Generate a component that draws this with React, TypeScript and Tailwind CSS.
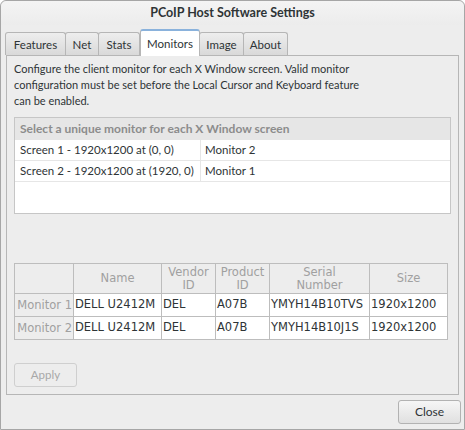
import React from 'react';

const ui = { fontFamily: 'Lato, "Noto Sans", sans-serif' };
const cell = { fontFamily: '"DejaVu Sans", sans-serif' };

const tabs = [
  { label: 'Features', w: 'w-[61px]' },
  { label: 'Net', w: 'w-[34px]' },
  { label: 'Stats', w: 'w-[42px]' },
  { label: 'Monitors', w: 'w-[60px]', active: true },
  { label: 'Image', w: 'w-[45px]' },
  { label: 'About', w: 'w-[45px]' },
];

const screens = [
  ['Screen 1 - 1920x1200 at (0, 0)', 'Monitor 2'],
  ['Screen 2 - 1920x1200 at (1920, 0)', 'Monitor 1'],
];

const monitors = [
  ['Monitor 1', 'DELL U2412M', 'DEL', 'A07B', 'YMYH14B10TVS', '1920x1200'],
  ['Monitor 2', 'DELL U2412M', 'DEL', 'A07B', 'YMYH14B10J1S', '1920x1200'],
];

export default function App() {
  return (
    <div className="w-[465px] h-[430px] bg-[#ededed] border border-[#a6a6a6] rounded-t-[6px] flex flex-col text-[#2e3436]" style={ui}>
      {/* Title bar */}
      <div className="h-[24px] flex items-center justify-center text-[12.5px] font-bold text-[#2e3436] bg-gradient-to-b from-[#f4f4f4] to-[#ececec] rounded-t-[6px]">
        PCoIP Host Software Settings
      </div>

      {/* Tabs */}
      <div className="flex items-end pl-[4px] h-[30px] relative z-10">
        {tabs.map((t) =>
          t.active ? (
            <div
              key={t.label}
              className={`${t.w} h-[27px] bg-white border border-[#b6b6b6] border-b-0 border-t-2 border-t-[#8ab2dc] rounded-t-[3px] flex items-center justify-center text-[11.5px] -mb-px`}
            >
              {t.label}
            </div>
          ) : (
            <div
              key={t.label}
              className={`${t.w} h-[23px] bg-gradient-to-b from-[#eeeeee] to-[#d9d9d9] border border-[#b6b6b6] border-b-0 rounded-t-[3px] -ml-px first:ml-0 flex items-center justify-center text-[11.5px] pt-px`}
            >
              {t.label}
            </div>
          )
        )}
      </div>

      {/* Notebook page */}
      <div className="mx-[5px] h-[340px] border border-[#b6b6b6] bg-[#ededed] px-[7px] pt-[5px] flex flex-col">
        <p className="text-[11px] leading-[16px]">
          Configure the client monitor for each X Window screen. Valid monitor
          <br />
          configuration must be set before the Local Cursor and Keyboard feature
          <br />
          can be enabled.
        </p>

        {/* Screen to monitor list */}
        <div className="mt-[8px] h-[97px] border border-[#c6c6c6] bg-white">
          <div className="h-[22px] bg-[#e6e6e6] flex items-center px-[5px] text-[12px] font-bold text-[#8c8c8c]">
            Select a unique monitor for each X Window screen
          </div>
          {screens.map(([s, m]) => (
            <div key={s} className="h-[21px] flex border-b border-[#e6e6e6] text-[11.5px]">
              <div className="w-[186px] px-[5px] flex items-center border-r border-[#e6e6e6] whitespace-nowrap">{s}</div>
              <div className="flex-1 px-[4px] flex items-center">{m}</div>
            </div>
          ))}
        </div>

        {/* Monitor table */}
        <table className="mt-[49px] w-[434px] border-collapse text-[11.5px]" style={cell}>
          <thead>
            <tr className="h-[30px] text-[#a0a0a0] leading-[13px]">
              <th className="w-[59px] border border-[#bdbdbd] font-normal"></th>
              <th className="w-[88px] border border-[#bdbdbd] font-normal">Name</th>
              <th className="w-[54px] border border-[#bdbdbd] font-normal">Vendor<br />ID</th>
              <th className="w-[54px] border border-[#bdbdbd] font-normal">Product<br />ID</th>
              <th className="w-[100px] border border-[#bdbdbd] font-normal">Serial<br />Number</th>
              <th className="border border-[#bdbdbd] font-normal">Size</th>
            </tr>
          </thead>
          <tbody>
            {monitors.map((r) => (
              <tr key={r[0]} className="h-[23px]">
                <td className="border border-[#bdbdbd] text-[#a0a0a0] text-right pr-px whitespace-nowrap align-bottom pb-[2px]">{r[0]}</td>
                {r.slice(1).map((v, i) => (
                  <td key={i} className="border border-[#bdbdbd] bg-white px-[1px] align-top pt-[2px] whitespace-nowrap">{v}</td>
                ))}
              </tr>
            ))}
          </tbody>
        </table>

        <div className="mt-[21px]">
          <button className="w-[63px] h-[24px] border border-[#cfcfcf] rounded-[3px] bg-[#ededed] text-[11.5px] text-[#a8a8a8]">
            Apply
          </button>
        </div>
      </div>

      {/* Footer */}
      <div className="flex justify-end pr-[3px] pt-[5px]">
        <button className="w-[63px] h-[24px] border border-[#b2b2b2] rounded-[3px] bg-gradient-to-b from-[#f6f6f6] to-[#e0e0e0] text-[12px] text-[#2e3436]">
          Close
        </button>
      </div>
    </div>
  );
}
